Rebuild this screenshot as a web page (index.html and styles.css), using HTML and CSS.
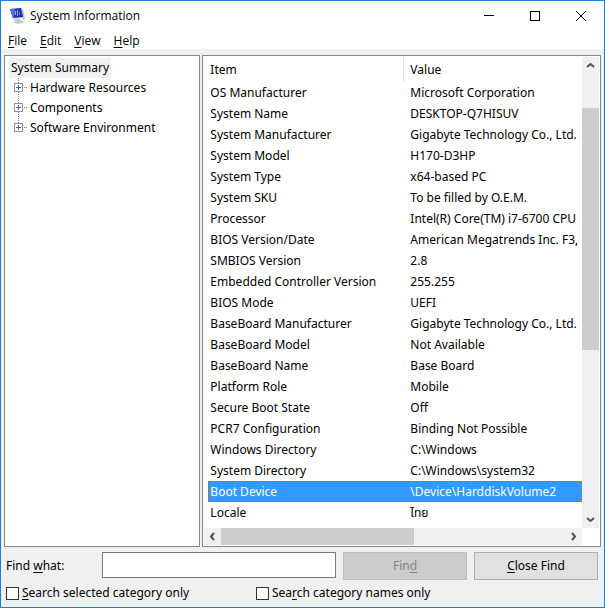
FILE: index.html
```html
<!DOCTYPE html>
<html lang="en">
<head>
    <meta charset="UTF-8">
    <meta name="viewport" content="width=device-width, initial-scale=1.0">
    <title>System Information</title>
    <link rel="stylesheet" href="styles.css">
</head>
<body>
    <svg class="symbols" width="0" height="0" aria-hidden="true">
        <symbol id="expand" viewBox="0 0 14 20">
            <path class="dots" d="M4.5 0V20M10 9.5H14"/>
            <rect x="0.5" y="5.5" width="8" height="8" fill="#fff" stroke="#919191"/>
            <path d="M2 9.5H7M4.5 7V12" stroke="#4b63a7"/>
        </symbol>
        <symbol id="expand-last" viewBox="0 0 14 20">
            <path class="dots" d="M4.5 0V5M10 9.5H14"/>
            <rect x="0.5" y="5.5" width="8" height="8" fill="#fff" stroke="#919191"/>
            <path d="M2 9.5H7M4.5 7V12" stroke="#4b63a7"/>
        </symbol>
    </svg>

    <header class="titlebar">
        <svg class="app-icon" width="16" height="16" viewBox="0 0 16 16">
            <path d="M5 11L9 11L10 12L14 13L13 15L7 16L4 14Z" fill="#c9c9cb"/>
            <path d="M0 1L12 0L14 10L3 12Z" fill="#d6d8dc"/>
            <path d="M11 0L13 1L15 11L13 12Z" fill="#c0c0c4"/>
            <path d="M0 1L11 0L13 9L3 10Z" fill="#1c30b0"/>
            <path d="M0 1L5 1L4 10L3 10Z" fill="#5572d4"/>
            <path d="M5.5 3V7M7.5 2V8" stroke="#8ea6f0"/>
            <path d="M9.5 4V7" stroke="#6f8ae4"/>
        </svg>
        <h1>System Information</h1>
        <div class="window-buttons">
            <button type="button" aria-label="Minimize">
                <svg width="12" height="12" viewBox="0 0 12 12"><path d="M1 5.5H11"/></svg>
            </button>
            <button type="button" aria-label="Maximize">
                <svg width="12" height="12" viewBox="0 0 12 12"><rect x="1.5" y="1.5" width="9" height="9"/></svg>
            </button>
            <button type="button" aria-label="Close">
                <svg width="12" height="12" viewBox="0 0 12 12"><path d="M1 1L11 11M11 1L1 11"/></svg>
            </button>
        </div>
    </header>

    <nav class="menubar">
        <a href="#file"><u>F</u>ile</a>
        <a href="#edit"><u>E</u>dit</a>
        <a href="#view"><u>V</u>iew</a>
        <a href="#help"><u>H</u>elp</a>
    </nav>

    <main class="panes">
        <section class="tree">
            <a class="tree-root" href="#summary">System Summary</a>
            <ul>
                <li>
                    <button type="button" aria-label="Expand Hardware Resources"><svg width="14" height="20"><use href="#expand"/></svg></button>
                    <a href="#hardware">Hardware Resources</a>
                </li>
                <li>
                    <button type="button" aria-label="Expand Components"><svg width="14" height="20"><use href="#expand"/></svg></button>
                    <a href="#components">Components</a>
                </li>
                <li>
                    <button type="button" aria-label="Expand Software Environment"><svg width="14" height="20"><use href="#expand-last"/></svg></button>
                    <a href="#software">Software Environment</a>
                </li>
            </ul>
        </section>

        <section class="details">
            <div class="list">
                <table>
                    <thead>
                        <tr><th class="item">Item</th><th>Value</th></tr>
                    </thead>
                    <tbody>
                        <tr><td>OS Manufacturer</td><td>Microsoft Corporation</td></tr>
                        <tr><td>System Name</td><td>DESKTOP-Q7HISUV</td></tr>
                        <tr><td>System Manufacturer</td><td>Gigabyte Technology Co., Ltd.</td></tr>
                        <tr><td>System Model</td><td>H170-D3HP</td></tr>
                        <tr><td>System Type</td><td>x64-based PC</td></tr>
                        <tr><td>System SKU</td><td>To be filled by O.E.M.</td></tr>
                        <tr><td>Processor</td><td>Intel(R) Core(TM) i7-6700 CPU</td></tr>
                        <tr><td>BIOS Version/Date</td><td>American Megatrends Inc. F3,</td></tr>
                        <tr><td>SMBIOS Version</td><td>2.8</td></tr>
                        <tr><td>Embedded Controller Version</td><td>255.255</td></tr>
                        <tr><td>BIOS Mode</td><td>UEFI</td></tr>
                        <tr><td>BaseBoard Manufacturer</td><td>Gigabyte Technology Co., Ltd.</td></tr>
                        <tr><td>BaseBoard Model</td><td>Not Available</td></tr>
                        <tr><td>BaseBoard Name</td><td>Base Board</td></tr>
                        <tr><td>Platform Role</td><td>Mobile</td></tr>
                        <tr><td>Secure Boot State</td><td>Off</td></tr>
                        <tr><td>PCR7 Configuration</td><td>Binding Not Possible</td></tr>
                        <tr><td>Windows Directory</td><td>C:\Windows</td></tr>
                        <tr><td>System Directory</td><td>C:\Windows\system32</td></tr>
                        <tr class="selected"><td>Boot Device</td><td>\Device\HarddiskVolume2</td></tr>
                        <tr><td>Locale</td><td lang="th">ไทย</td></tr>
                    </tbody>
                </table>
            </div>
            <div class="scrollbar vertical">
                <button type="button" aria-label="Scroll up"><svg width="9" height="9" viewBox="0 0 9 9"><path d="M1 6L4.5 3L8 6"/></svg></button>
                <div class="track"><div class="thumb"></div></div>
                <button type="button" aria-label="Scroll down"><svg width="9" height="9" viewBox="0 0 9 9"><path d="M1 3L4.5 6L8 3"/></svg></button>
            </div>
            <div class="scrollbar horizontal">
                <button type="button" aria-label="Scroll left"><svg width="9" height="9" viewBox="0 0 9 9"><path d="M6 1L3 4.5L6 8"/></svg></button>
                <div class="track"><div class="thumb"></div></div>
                <button type="button" aria-label="Scroll right"><svg width="9" height="9" viewBox="0 0 9 9"><path d="M3 1L6 4.5L3 8"/></svg></button>
            </div>
        </section>
    </main>

    <form class="find">
        <div class="find-row">
            <label for="findText">Find <u>w</u>hat:</label>
            <input type="text" id="findText">
            <button type="button" disabled>Fin<u>d</u></button>
            <button type="button"><u>C</u>lose Find</button>
        </div>
        <div class="options">
            <div class="option">
                <input type="checkbox" id="selectedOnly">
                <label for="selectedOnly"><u>S</u>earch selected category only</label>
            </div>
            <div class="option">
                <input type="checkbox" id="namesOnly">
                <label for="namesOnly">Sea<u>r</u>ch category names only</label>
            </div>
        </div>
    </form>
</body>
</html>
```
FILE: styles.css
```css
* {
    box-sizing: border-box;
}
body {
    margin: 0;
    height: 100vh;
    display: flex;
    flex-direction: column;
    border: 1px solid #1a80d4;
    background-color: #f0f0f0;
    color: #000;
    font-family: "Noto Sans", "Noto Sans Thai", sans-serif;
    font-size: 12px;
    line-height: 20px;
    overflow: hidden;
}
a {
    color: inherit;
    text-decoration: none;
}
u {
    text-underline-offset: 2px;
}
button {
    font: inherit;
    color: inherit;
    padding: 0;
    border: none;
    background: none;
}
.symbols {
    position: absolute;
}
.dots {
    stroke: #808080;
    stroke-dasharray: 1 1;
}

/* Title bar and menu */
.titlebar {
    display: flex;
    align-items: center;
    height: 30px;
    padding-left: 9px;
    background-color: #fff;
}
.app-icon {
    margin-right: 4px;
}
h1 {
    flex: 1;
    margin: 0;
    font-family: "Open Sans", sans-serif;
    font-size: 12px;
    font-weight: normal;
}
.window-buttons {
    display: flex;
}
.window-buttons button {
    display: grid;
    place-items: center;
    width: 46px;
    height: 28px;
}
.window-buttons svg {
    fill: none;
    stroke: #000;
}
.menubar {
    display: flex;
    gap: 13px;
    height: 18px;
    padding-left: 7px;
    background-color: #fff;
    font-family: "Open Sans", sans-serif;
}

/* Panes */
.panes {
    flex: 1;
    min-height: 0;
    display: grid;
    grid-template-columns: 33fr 67fr;
    gap: 2px;
    padding: 6px 3px 0;
}
.tree,
.details {
    min-width: 0;
    border: 1px solid #828790;
    background-color: #fff;
}
.tree {
    padding: 2px 4px;
}
.tree-root {
    display: inline-block;
    padding: 0 2px;
    background-color: #f0f0f0;
}
.tree ul {
    margin: 0;
    padding: 0 0 0 5px;
    list-style: none;
}
.tree li {
    display: flex;
    gap: 2px;
    height: 20px;
}
.tree svg {
    display: block;
}
.details {
    display: grid;
    grid-template-columns: 1fr 17px;
    grid-template-rows: 1fr 17px;
    padding: 1px;
}
.list {
    min-width: 0;
    min-height: 0;
    padding-left: 4px;
    overflow: hidden;
}
table {
    width: 100%;
    table-layout: fixed;
    border-collapse: separate;
    border-spacing: 0;
}
th,
td {
    height: 21px;
    padding: 0 0 0 6px;
    font-weight: normal;
    text-align: left;
    line-height: 19px;
    white-space: nowrap;
    overflow: hidden;
}
th {
    height: 25px;
}
th:first-child,
td:first-child {
    padding-left: 2px;
}
.item {
    width: 196px;
    border-right: 1px solid #e5e5e5;
}
.selected td {
    border: 1px solid #b5702c;
    border-width: 1px 0;
    background-color: #3399ff;
    color: #fff;
}
.selected td:first-child {
    padding-left: 1px;
    border-left-width: 1px;
}

/* Scroll bars */
.scrollbar {
    display: flex;
    background-color: #f0f0f0;
}
.scrollbar button {
    display: grid;
    place-items: center;
    width: 17px;
    height: 17px;
}
.scrollbar svg {
    fill: none;
    stroke: #505050;
    stroke-width: 2;
}
.track {
    flex: 1;
}
.thumb {
    background-color: #cdcdcd;
}
.vertical {
    flex-direction: column;
}
.vertical .track {
    padding-top: 34px;
}
.vertical .thumb {
    height: 60%;
}
.horizontal .thumb {
    width: 56%;
    height: 100%;
}

/* Find bar */
.find {
    padding: 5px 6px 4px 5px;
}
.find-row {
    display: grid;
    grid-template-columns: 89px 1fr 124px 124px;
    column-gap: 7px;
    align-items: center;
}
.find-row input {
    align-self: start;
    height: 26px;
    min-width: 0;
    padding: 0 4px;
    border: 1px solid #7a7a7a;
    background-color: #fff;
    font: inherit;
}
.find-row button {
    height: 28px;
    border: 1px solid #adadad;
    background-color: #e1e1e1;
}
.find-row button:disabled {
    border-color: #bfbfbf;
    background-color: #cccccc;
    color: #838383;
}
.options {
    display: flex;
    padding-top: 3px;
}
.option {
    display: flex;
    align-items: center;
    gap: 3px;
    width: 250px;
}
.option input {
    appearance: none;
    width: 13px;
    height: 13px;
    margin: 0;
    border: 1px solid #333;
    background-color: #fff;
}
.option input:checked {
    background-color: #333;
}
```
